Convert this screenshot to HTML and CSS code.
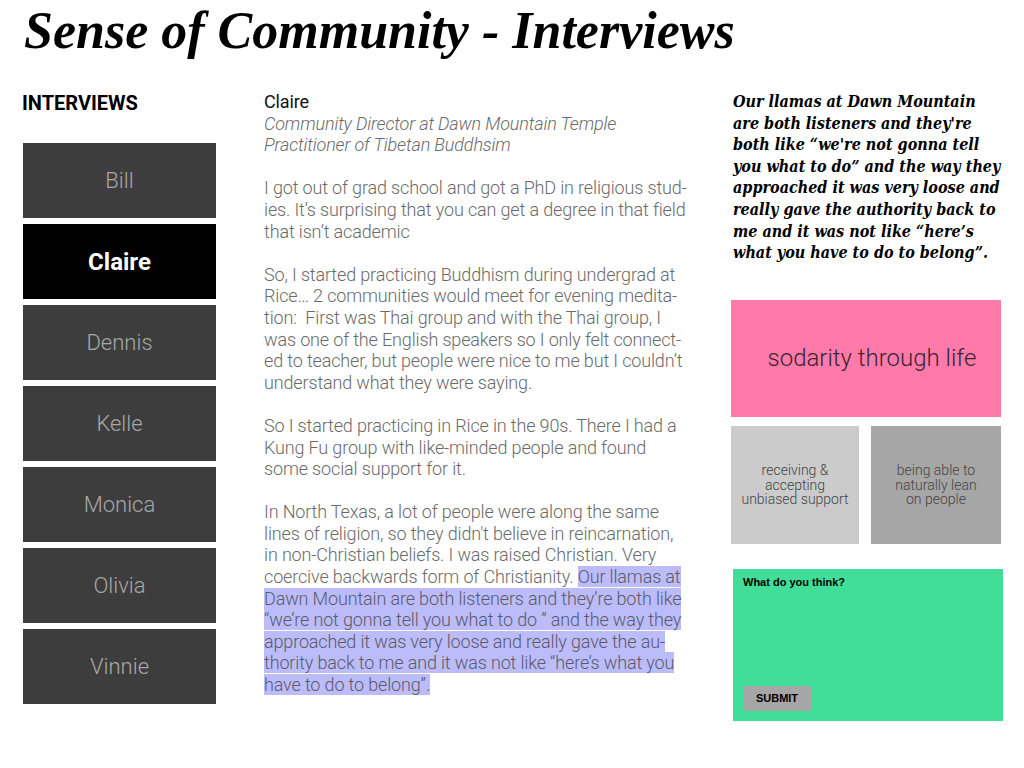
FILE: index.html
```html
<!DOCTYPE html>
<html lang="en">
<head>
    <meta charset="UTF-8">
    <meta name="viewport" content="width=device-width, initial-scale=1.0">
    <title>Sense of Community - Interviews</title>
    <link rel="stylesheet" href="styles.css">
</head>
<body>
    <header class="page-header">
        <h1>Sense of Community - Interviews</h1>
    </header>

    <main class="layout">
        <nav class="sidebar">
            <h2>INTERVIEWS</h2>
            <ul class="people">
                <li><a href="#">Bill</a></li>
                <li><a href="#" class="active">Claire</a></li>
                <li><a href="#">Dennis</a></li>
                <li><a href="#">Kelle</a></li>
                <li><a href="#">Monica</a></li>
                <li><a href="#">Olivia</a></li>
                <li><a href="#">Vinnie</a></li>
            </ul>
        </nav>

        <article class="interview">
            <div class="person">
                <h3>Claire</h3>
                <p class="role">Community Director at Dawn Mountain Temple<br>Practitioner of Tibetan Buddhsim</p>
            </div>
            <p>I got out of grad school and got a PhD in religious stud&shy;ies. It&rsquo;s surprising that you can get a degree in that field that isn&rsquo;t academic</p>
            <p>So, I started practicing Buddhism during undergrad at Rice&hellip; 2 communities would meet for evening medita&shy;tion:&nbsp; First was Thai group and with the Thai group, I was one of the English speakers so I only felt connect&shy;ed to teacher, but people were nice to me but I couldn&rsquo;t understand what they were saying.</p>
            <p>So I started practicing in Rice in the 90s. There I had a Kung Fu group with like-minded people and found some social support for it.</p>
            <p>In North Texas, a lot of people were along the same lines of religion, so they didn't believe in reincarnation, in non-Christian beliefs. I was raised Christian. Very coercive backwards form of Christianity. <mark>Our llamas at Dawn Mountain are both listeners and they&rsquo;re both like &ldquo;we&rsquo;re not gonna tell you what to do &rdquo; and the way they approached it was very loose and really gave the au&shy;thority back to me and it was not like &ldquo;here&rsquo;s what you have to do to belong&rdquo;.</mark></p>
        </article>

        <aside class="notes">
            <blockquote class="quote">Our llamas at Dawn Mountain are both listeners and they're both like &ldquo;we're not gonna tell you what to do&rdquo; and the way they approached it was very loose and really gave the authority back to me and it was not like &ldquo;here&rsquo;s what you have to do to belong&rdquo;.</blockquote>

            <div class="theme theme-main">sodarity through life</div>
            <div class="theme-row">
                <div class="theme theme-light">receiving &amp;<br>accepting<br>unbiased support</div>
                <div class="theme theme-dark">being able to<br>naturally lean<br>on people</div>
            </div>

            <form class="feedback">
                <label for="thoughts">What do you think?</label>
                <textarea id="thoughts" name="thoughts"></textarea>
                <button type="submit">SUBMIT</button>
            </form>
        </aside>
    </main>
</body>
</html>
```

FILE: styles.css
```css
body {
    margin: 0;
    padding: 0 0 0 23px;
    background-color: #ffffff;
    font-family: Roboto, "Noto Sans", sans-serif;
    color: #000;
}
.page-header h1 {
    margin: 3px 0 32px 1px;
    height: 56px;
    font-family: "Liberation Serif", serif;
    font-style: italic;
    font-weight: bold;
    font-size: 52px;
    line-height: 56px;
}
.layout {
    display: flex;
    align-items: flex-start;
}
.sidebar {
    width: 193px;
    margin-right: 48px;
}
.sidebar h2 {
    margin: 0 0 28px -1px;
    font-size: 20px;
    font-weight: bold;
    line-height: 24px;
}
.people {
    list-style: none;
    margin: 0;
    padding: 0;
    display: flex;
    flex-direction: column;
    gap: 6px;
}
.people a {
    display: flex;
    align-items: center;
    justify-content: center;
    height: 75px;
    background-color: #3d3d3d;
    color: #a8a8a8;
    font-size: 22px;
    font-weight: 300;
    text-decoration: none;
}
.people a.active {
    background-color: #000;
    color: #fff;
    font-size: 24px;
    font-weight: bold;
}
.interview {
    width: 426px;
    margin-right: 41px;
    font-size: 18px;
    line-height: 21.6px;
    font-weight: 300;
    letter-spacing: -0.15px;
    color: #6a6a6a;
}
.interview p {
    margin: 0 0 21.6px;
}
.person h3 {
    margin: 0;
    font-size: 18px;
    font-weight: normal;
    color: #111;
}
.person .role {
    font-style: italic;
}
.interview mark {
    background-color: #bcbcfa;
    color: #5a5a6a;
}
.notes {
    width: 272px;
    display: flex;
    flex-direction: column;
}
.quote {
    margin: 0 0 36px 2px;
    font-family: "DejaVu Serif Condensed", "DejaVu Serif", serif;
    font-stretch: condensed;
    font-style: italic;
    font-weight: bold;
    font-size: 16px;
    line-height: 21.6px;
    color: #000;
}
.theme {
    display: flex;
    align-items: center;
    justify-content: center;
    text-align: center;
    font-weight: 300;
    color: #444;
}
.theme-main {
    width: 270px;
    height: 117px;
    background-color: #ff7aa8;
    font-size: 24px;
    padding-left: 12px;
    box-sizing: border-box;
    color: #3a2430;
}
.theme-row {
    display: flex;
    gap: 12px;
    margin-top: 9px;
}
.theme-light, .theme-dark {
    height: 118px;
    font-size: 14px;
    line-height: 14.5px;
}
.theme-light {
    width: 128px;
    background-color: #cbcbcb;
}
.theme-dark {
    width: 130px;
    background-color: #a6a6a6;
}
.feedback {
    margin: 25px 0 0 2px;
    width: 270px;
    height: 152px;
    box-sizing: border-box;
    padding: 7px 10px 10px;
    background-color: #40de99;
    display: flex;
    flex-direction: column;
    font-family: "Liberation Sans", Arial, sans-serif;
}
.feedback label {
    font-size: 11px;
    font-weight: bold;
}
.feedback textarea {
    flex: 1;
    background: transparent;
    border: none;
    resize: none;
    outline: none;
}
.feedback button {
    align-self: flex-start;
    width: 68px;
    height: 25px;
    border: none;
    background-color: #a6a6a6;
    font-family: "Liberation Sans", Arial, sans-serif;
    font-size: 11px;
    font-weight: bold;
    color: #000;
}
```
